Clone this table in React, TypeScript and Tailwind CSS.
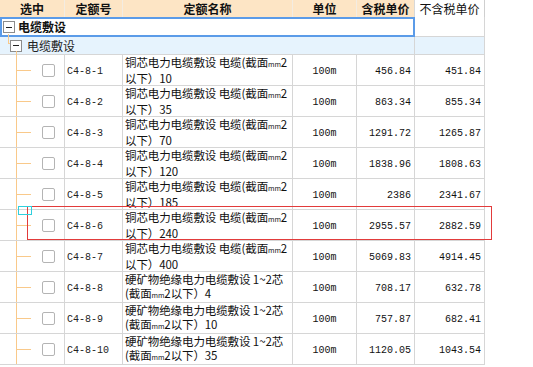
import React from "react";

type Row = {
  code: string;
  line1: React.ReactNode;
  line2: React.ReactNode;
  unit: string;
  taxed: string;
  untaxed: string;
};

const Mm = () => <span className="text-[7px]">mm</span>;

const copper = (
  <>
    铜芯电力电缆敷设 电缆(截面<Mm />2
  </>
);
const mineral = <>硬矿物绝缘电力电缆敷设 1~2芯</>;

const rows: Row[] = [
  { code: "C4-8-1", line1: copper, line2: "以下）10", unit: "100m", taxed: "456.84", untaxed: "451.84" },
  { code: "C4-8-2", line1: copper, line2: "以下）35", unit: "100m", taxed: "863.34", untaxed: "855.34" },
  { code: "C4-8-3", line1: copper, line2: "以下）70", unit: "100m", taxed: "1291.72", untaxed: "1265.87" },
  { code: "C4-8-4", line1: copper, line2: "以下）120", unit: "100m", taxed: "1838.96", untaxed: "1808.63" },
  { code: "C4-8-5", line1: copper, line2: "以下）185", unit: "100m", taxed: "2386", untaxed: "2341.67" },
  { code: "C4-8-6", line1: copper, line2: "以下）240", unit: "100m", taxed: "2955.57", untaxed: "2882.59" },
  { code: "C4-8-7", line1: copper, line2: "以下）400", unit: "100m", taxed: "5069.83", untaxed: "4914.45" },
  { code: "C4-8-8", line1: mineral, line2: <>(截面<Mm />2以下）4</>, unit: "100m", taxed: "708.17", untaxed: "632.78" },
  { code: "C4-8-9", line1: mineral, line2: <>(截面<Mm />2以下）10</>, unit: "100m", taxed: "757.87", untaxed: "682.41" },
  { code: "C4-8-10", line1: mineral, line2: <>(截面<Mm />2以下）35</>, unit: "100m", taxed: "1120.05", untaxed: "1043.54" },
];

const mono = "font-['Liberation_Mono',monospace] text-[10px]";

// 树节点的 ⊟ 小方框
const MinusBox = () => (
  <span className="flex h-[12px] w-[12px] shrink-0 items-center justify-center border border-[#8c8c8c] bg-white">
    <span className="h-px w-[6px] bg-[#222]" />
  </span>
);

export default function App() {
  return (
    <div className="relative h-[367px] w-[533px] overflow-hidden bg-white text-[12px] text-[#111] font-['Noto_Sans_CJK_SC',sans-serif]">
      {/* 表头 */}
      <div className="flex h-[17px] w-[485px] leading-[17px]">
        <div className="w-[65px] border-r border-[#f3ece2] bg-[#fde5c5] text-center font-bold">选中</div>
        <div className="w-[58px] border-r border-[#f3ece2] bg-[#fde5c5] text-center font-bold">定额号</div>
        <div className="w-[170px] border-r border-[#f3ece2] bg-[#fde5c5] text-center font-bold">定额名称</div>
        <div className="w-[64px] border-r border-[#f3ece2] bg-[#fde5c5] text-center font-bold">单位</div>
        <div className="w-[58px] border-r border-[#d8d8d8] bg-[#fde5c5] text-center font-bold">含税单价</div>
        <div className="w-[70px] border-r border-[#cfcfcf] text-center">不含税单价</div>
      </div>

      {/* 一级分组 */}
      <div className="flex h-[20px] w-[485px]">
        <div className="relative flex w-[415px] items-center gap-[3px] border-2 border-[#5b9be8] pl-[1px] font-bold">
          <MinusBox />
          <span>电缆敷设</span>
          <span className="absolute left-[6px] top-[15px] h-[10px] w-px bg-[#f9c98a]" />
          <span className="absolute left-[6px] top-[24px] h-px w-[3px] bg-[#f9c98a]" />
        </div>
        <div className="w-[70px] border-r border-b border-[#d6d6d6]" />
      </div>

      {/* 二级分组 */}
      <div className="flex h-[18px] w-[485px] bg-[#e6f3fd]">
        <div className="relative flex w-[415px] items-center gap-[5px] border-r border-b border-[#d6d6d6] pl-[10px]">
          <MinusBox />
          <span className="text-[#222]">电缆敷设</span>
          <span className="absolute left-[16px] top-[14px] h-[4px] w-px bg-[#f9c98a]" />
        </div>
        <div className="w-[70px] border-r border-b border-[#d6d6d6]" />
      </div>

      {/* 明细行 */}
      {rows.map((r) => (
        <div key={r.code} className="flex h-[31px] w-[485px]">
          <div className="relative flex w-[65px] items-center justify-end border-r border-b border-[#d6d6d6] pr-[9px]">
            <span className="absolute left-[16px] top-0 h-full w-px bg-[#f9c98a]" />
            <span className="absolute left-[16px] top-[15px] h-px w-[15px] bg-[#f9c98a]" />
            <span className="h-[13px] w-[13px] rounded-[2px] border border-[#b4b4b4] bg-white" />
          </div>
          <div className={`flex w-[58px] items-center border-r border-b border-[#d6d6d6] pl-[2px] pt-[3px] text-[#222] ${mono}`}>
            {r.code}
          </div>
          <div className="flex w-[170px] flex-col justify-center overflow-hidden whitespace-nowrap border-r border-b border-[#d6d6d6] pl-[2px] text-[11.5px] leading-[14px] tracking-[-0.1px]">
            <span>{r.line1}</span>
            <span>{r.line2}</span>
          </div>
          <div className={`flex w-[64px] items-center justify-center border-r border-b border-[#d6d6d6] pt-[3px] ${mono}`}>
            {r.unit}
          </div>
          <div className={`flex w-[58px] items-center justify-end border-r border-b border-[#d6d6d6] pr-[3px] pt-[3px] ${mono}`}>
            {r.taxed}
          </div>
          <div className={`flex w-[70px] items-center justify-end border-r border-b border-[#d6d6d6] pr-[3px] pt-[3px] ${mono}`}>
            {r.untaxed}
          </div>
        </div>
      ))}

      {/* 选中框标记 */}
      <div className="pointer-events-none absolute left-[27px] top-[206px] h-[34px] w-[465px] border border-[#e23b3b]" />
      <div className="pointer-events-none absolute left-[18px] top-[206px] h-[9px] w-[14px] border border-[#2fd0dd]" />
    </div>
  );
}
